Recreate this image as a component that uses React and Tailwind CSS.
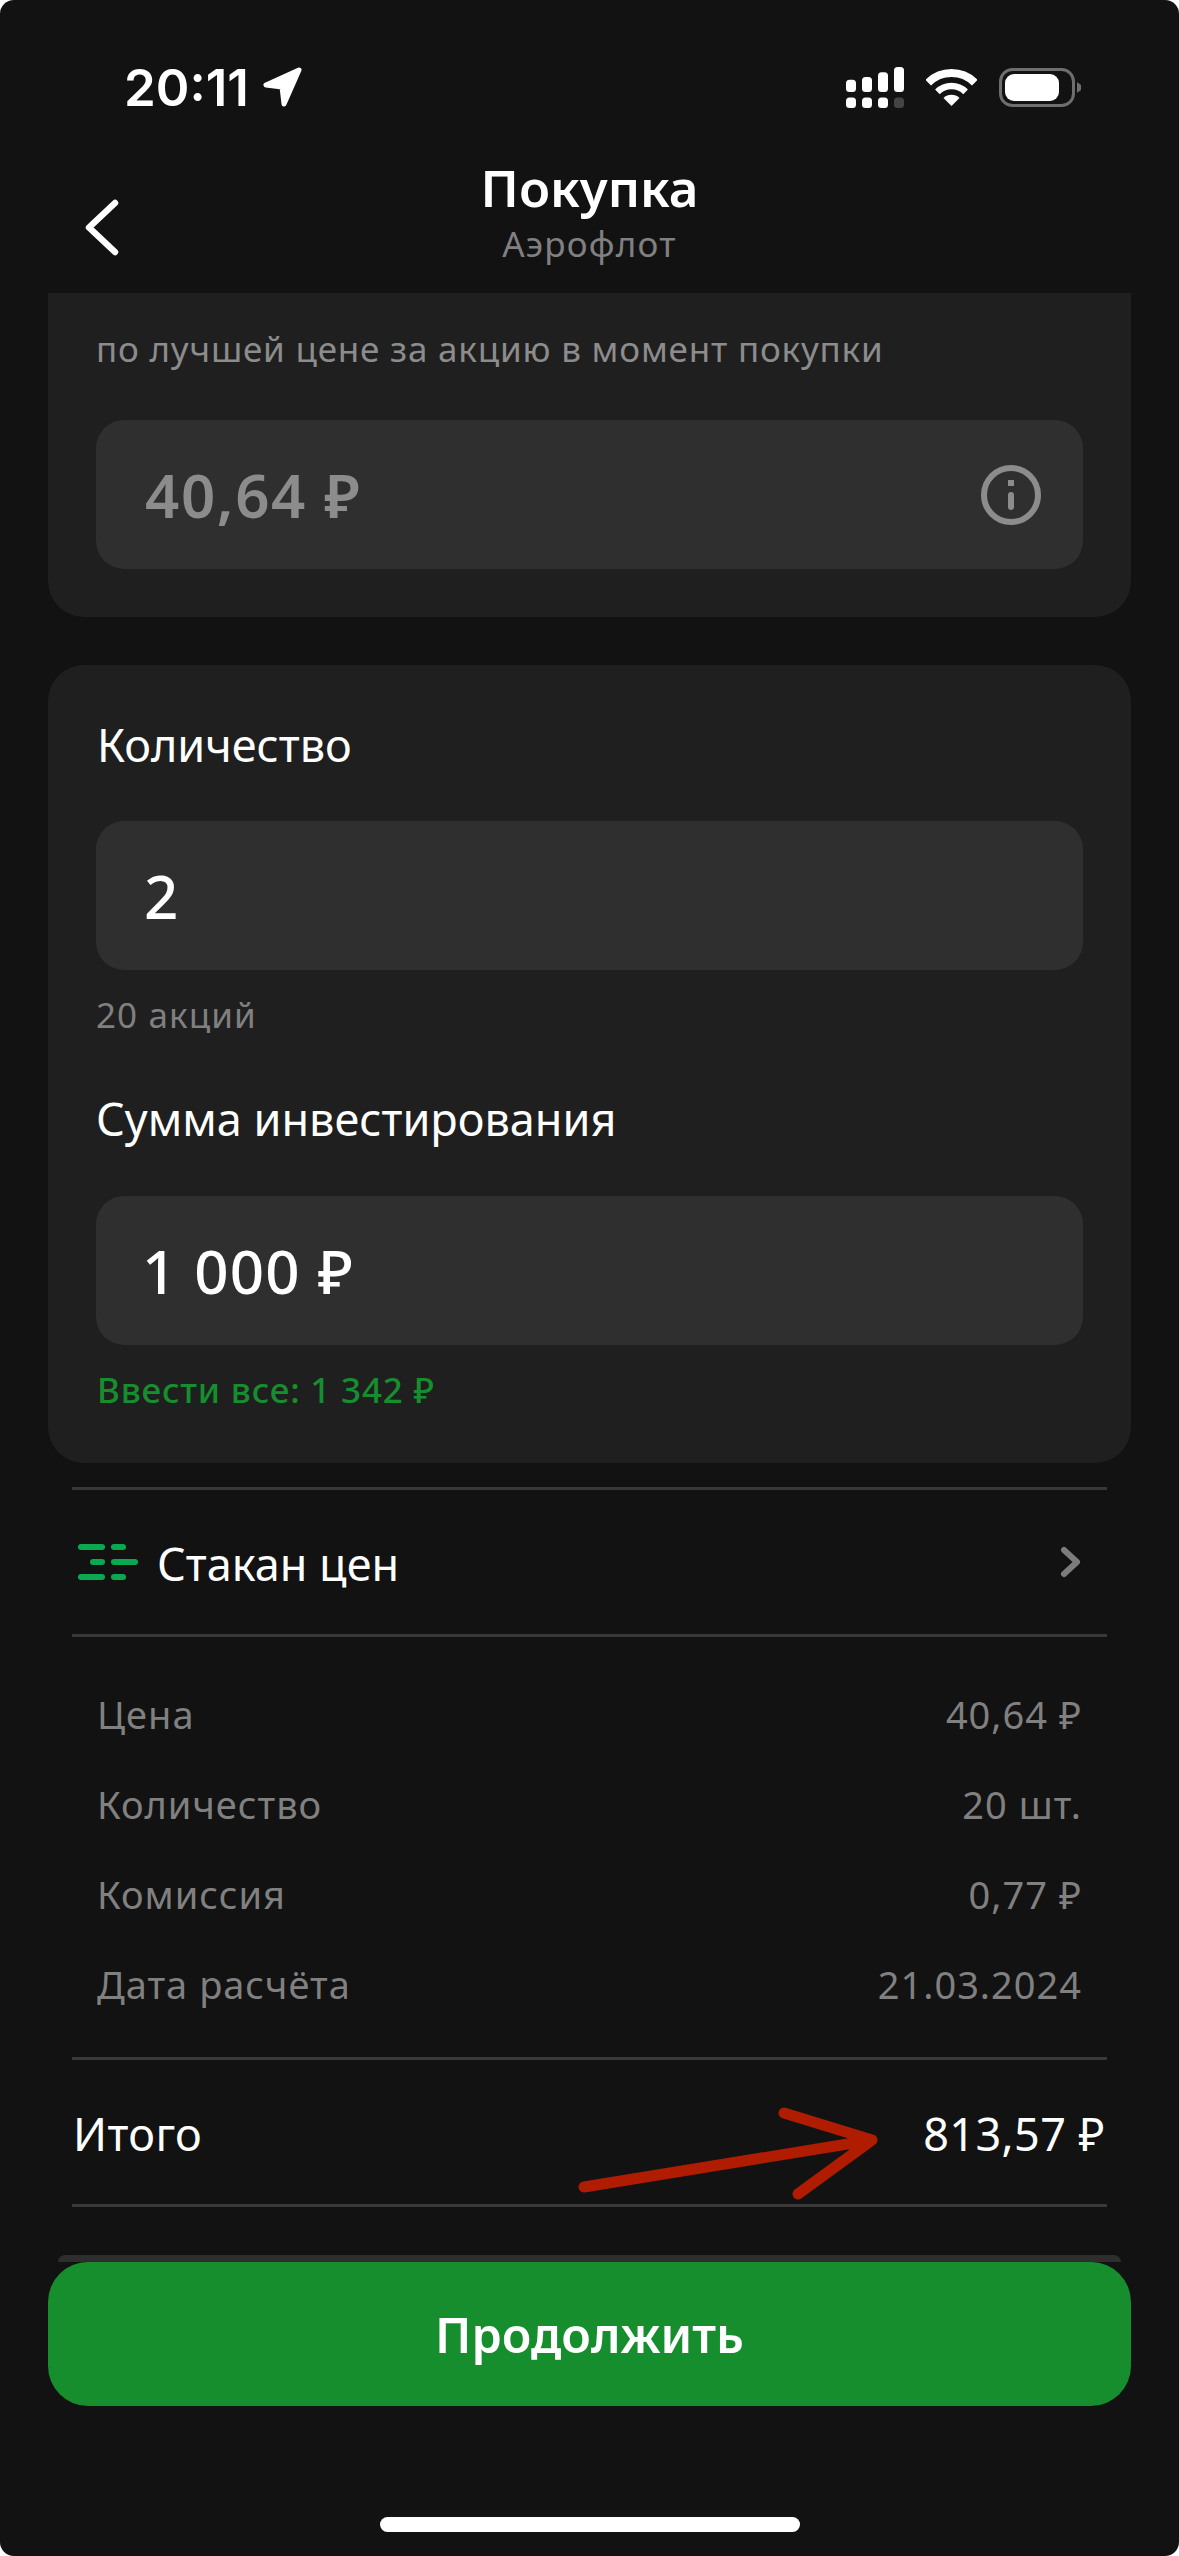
export default function App() {
  const rows = [
    ["Цена", "40,64 ₽"],
    ["Количество", "20 шт."],
    ["Комиссия", "0,77 ₽"],
    ["Дата расчёта", "21.03.2024"],
  ];
  return (
    <div className="w-[1179px] h-[2556px] bg-white overflow-hidden font-['Noto_Sans',sans-serif]">
      <div className="w-full h-full bg-[#121212] rounded-[14px] flex flex-col overflow-hidden">
        {/* status bar */}
        <div className="h-[150px] flex items-start justify-between pl-[124px] pr-[98px] pt-[60px] shrink-0">
          <div className="flex items-center gap-[13px] h-[54px]">
            <span className="font-['Inter',sans-serif] font-semibold text-[51px] leading-[54px] text-white pt-[1px]">20:11</span>
            <svg width="42" height="42" viewBox="0 0 42 42">
              <path d="M37 4 L4 19 L20 21 L22 38 Z" fill="#fff" stroke="#fff" strokeWidth="5" strokeLinejoin="round" />
            </svg>
          </div>
          <div className="flex items-center gap-[22px] h-[54px]">
            <svg width="58" height="41" viewBox="0 0 58 41">
              <rect x="0" y="12.7" width="10" height="12.3" rx="3.5" fill="#fff" />
              <rect x="16" y="10" width="10" height="15" rx="3.5" fill="#fff" />
              <rect x="32" y="5.3" width="10" height="19.7" rx="3.5" fill="#fff" />
              <rect x="48" y="0" width="10" height="25" rx="3.5" fill="#fff" />
              <rect x="0" y="30.6" width="10" height="10.4" rx="3.5" fill="#fff" />
              <rect x="16" y="30.6" width="10" height="10.4" rx="3.5" fill="#fff" />
              <rect x="32" y="30.6" width="10" height="10.4" rx="3.5" fill="#fff" />
              <rect x="48" y="30.6" width="10" height="10.4" rx="3.5" fill="#444" />
            </svg>
            <svg width="51" height="37" viewBox="0 0 51 37">
              <path d="M2.2 13.7 A33 33 0 0 1 48.8 13.7" fill="none" stroke="#fff" strokeWidth="8" />
              <path d="M11.4 22.9 A20 20 0 0 1 39.6 22.9" fill="none" stroke="#fff" strokeWidth="6.5" />
              <path d="M25.5 37 L17.5 29 A11.3 11.3 0 0 1 33.5 29 Z" fill="#fff" />
            </svg>
            <svg width="82" height="39" viewBox="0 0 82 39">
              <rect x="1.5" y="1.5" width="73" height="36" rx="12" fill="none" stroke="#6e6e6e" strokeWidth="3" />
              <rect x="6" y="6" width="54" height="27" rx="9" fill="#fff" />
              <path d="M78 14 L82 17 V22 L78 25 Z" fill="#6e6e6e" />
            </svg>
          </div>
        </div>
        {/* header */}
        <div className="relative h-[143px] shrink-0 flex flex-col items-center">
          <div className="absolute left-[85px] top-[49px]">
            <svg width="34" height="57" viewBox="0 0 34 57">
              <path d="M30 4 L4 28.5 L30 53" fill="none" stroke="#fff" strokeWidth="6.5" strokeLinecap="round" strokeLinejoin="round" />
            </svg>
          </div>
          <div className="text-white text-[51px] leading-[60px] font-semibold mt-[7px]">Покупка</div>
          <div className="text-[#808080] text-[35px] leading-[44px] mt-[5px] tracking-[1.2px]">Аэрофлот</div>
        </div>

        {/* content */}
        <div className="px-[48px] shrink-0">
          <div className="bg-[#1f1f1f] rounded-b-[36px] px-[48px] h-[324px]">
            <div className="text-[#8c8c8c] text-[35px] leading-[44px] pt-[34px] h-[127px] tracking-[0.8px]">по лучшей цене за акцию в момент покупки</div>
            <div className="bg-[#2f2f2f] rounded-[28px] h-[149px] flex items-center justify-between pl-[49px] pr-[42px]">
              <span className="text-[#8c8c8c] text-[60px] leading-[70px] font-semibold tracking-[1.6px]">40,64 ₽</span>
              <svg width="60" height="60" viewBox="0 0 60 60">
                <circle cx="30" cy="30" r="27" fill="none" stroke="#8c8c8c" strokeWidth="6" />
                <rect x="27" y="15" width="6" height="6" fill="#8c8c8c" />
                <rect x="27" y="27" width="6" height="18" rx="3" fill="#8c8c8c" />
              </svg>
            </div>
          </div>
          <div className="bg-[#1f1f1f] rounded-[36px] mt-[48px] px-[48px] pt-[50px] pb-[51px]">
            <div className="text-white text-[45px] leading-[60px] pl-[1px]">Количество</div>
            <div className="bg-[#2f2f2f] rounded-[28px] h-[149px] mt-[46px] flex items-center pl-[48px]">
              <span className="text-white text-[60px] leading-[70px] font-medium">2</span>
            </div>
            <div className="text-[#808080] text-[35px] leading-[44px] mt-[23px] tracking-[1.1px]">20 акций</div>
            <div className="text-white text-[45px] leading-[60px] mt-[52px]">Сумма инвестирования</div>
            <div className="bg-[#2f2f2f] rounded-[28px] h-[149px] mt-[47px] flex items-center pl-[46px]">
              <span className="text-white text-[60px] leading-[70px] font-medium tracking-[1.2px]">1 000 ₽</span>
            </div>
            <div className="text-[#168e2e] text-[35px] leading-[44px] mt-[23px] pl-[1px] font-medium tracking-[0.8px]">Ввести все: 1 342 ₽</div>
          </div>
        </div>

        <div className="mx-[72px] mt-[24px] border-t-[3px] border-[#383838] shrink-0">
          <div className="h-[144px] flex items-center pl-[6px] pr-[25px]">
            <svg width="60" height="36" viewBox="0 0 60 36" className="shrink-0">
              <rect x="0" y="0" width="27" height="6" rx="3" fill="#0aa850" />
              <rect x="33" y="0" width="15" height="6" rx="3" fill="#0aa850" />
              <rect x="12" y="15" width="15" height="6" rx="3" fill="#0aa850" />
              <rect x="33" y="15" width="27" height="6" rx="3" fill="#0aa850" />
              <rect x="0" y="30" width="27" height="6" rx="3" fill="#0aa850" />
              <rect x="33" y="30" width="15" height="6" rx="3" fill="#0aa850" />
            </svg>
            <span className="text-white text-[45px] leading-[60px] ml-[19px] flex-1 pt-[4px]">Стакан цен</span>
            <svg width="22" height="32" viewBox="0 0 22 32">
              <path d="M4 4 L17 16 L4 28" fill="none" stroke="#7c7c7c" strokeWidth="6" strokeLinecap="round" strokeLinejoin="round" />
            </svg>
          </div>
          <div className="border-t-[3px] border-[#383838] pt-[32px] pb-[28px] px-[25px]">
            {rows.map(([label, value]) => (
              <div key={label} className="h-[90px] flex items-center justify-between text-[#808080] text-[38px] tracking-[1px]">
                <span>{label}</span>
                <span>{value}</span>
              </div>
            ))}
          </div>
          <div className="relative border-t-[3px] border-[#383838] h-[147px] pt-[3px] flex items-center justify-between pl-[1px] pr-[2px] text-white text-[45px] tracking-[0.4px]">
            <span>Итого</span>
            <span>813,57 ₽</span>
            <svg className="absolute left-[500px] top-[46px]" width="310" height="100" viewBox="0 0 310 100">
              <path d="M12 81 L300 34 M212 7 L300 34 L226 88" fill="none" stroke="#b01c00" strokeWidth="11" strokeLinecap="round" strokeLinejoin="round" />
            </svg>
          </div>
          <div className="border-t-[3px] border-[#383838]" />
        </div>

        <div className="px-[48px] mt-[48px] shrink-0">
          <div className="mx-[10px] h-[7px] rounded-t-[24px] bg-[#2e2e2e]" />
          <div className="h-[144px] bg-[#168e2e] rounded-[40px] flex items-center justify-center text-white text-[48.5px] font-semibold">Продолжить</div>
        </div>
        <div className="mt-[111px] mx-auto w-[420px] h-[15px] rounded-full bg-white shrink-0" />
      </div>
    </div>
  );
}
